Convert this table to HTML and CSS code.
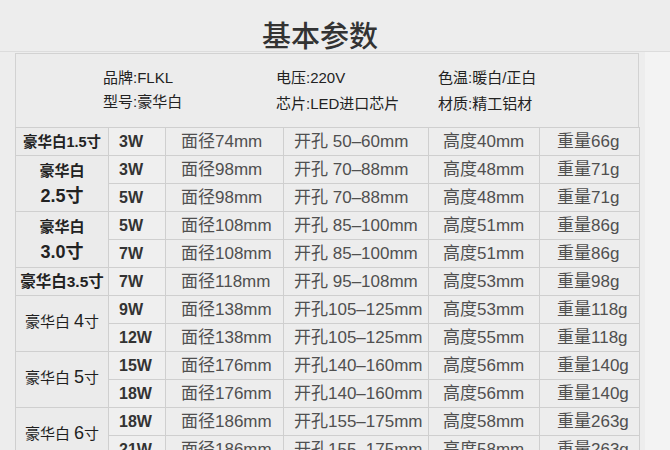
FILE: index.html
```html
<!DOCTYPE html>
<html lang="zh-CN">
<head>
<meta charset="utf-8">
<title>基本参数</title>
<link rel="stylesheet" href="styles.css">
</head>
<body>
<div class="page">
  <h1 class="title">基本参数</h1>
  <div class="sheet">
    <div class="info">
      <div class="info-col">
        <div>品牌:FLKL</div>
        <div>型号:豪华白</div>
      </div>
      <div class="info-col">
        <div>电压:220V</div>
        <div class="low">芯片:LED进口芯片</div>
      </div>
      <div class="info-col">
        <div>色温:暖白/正白</div>
        <div class="low">材质:精工铝材</div>
      </div>
    </div>
    <table class="spec">
      <colgroup>
        <col class="c-model"><col class="c-watt"><col class="c-dia"><col class="c-hole"><col class="c-height"><col class="c-weight">
      </colgroup>
      <tbody>
        <tr>
          <td class="model b">豪华白1.5寸</td>
          <td class="watt">3W</td><td class="dia">面径74mm</td><td class="hole">开孔 50–60mm</td><td class="hgt">高度40mm</td><td class="wgt">重量66g</td>
        </tr>
        <tr>
          <td class="model b" rowspan="2"><span class="l1">豪华白</span><span class="l2">2.5寸</span></td>
          <td class="watt">3W</td><td class="dia">面径98mm</td><td class="hole">开孔 70–88mm</td><td class="hgt">高度48mm</td><td class="wgt">重量71g</td>
        </tr>
        <tr>
          <td class="watt">5W</td><td class="dia">面径98mm</td><td class="hole">开孔 70–88mm</td><td class="hgt">高度48mm</td><td class="wgt">重量71g</td>
        </tr>
        <tr>
          <td class="model b" rowspan="2"><span class="l1">豪华白</span><span class="l2">3.0寸</span></td>
          <td class="watt">5W</td><td class="dia">面径108mm</td><td class="hole">开孔 85–100mm</td><td class="hgt">高度51mm</td><td class="wgt">重量86g</td>
        </tr>
        <tr>
          <td class="watt">7W</td><td class="dia">面径108mm</td><td class="hole">开孔 85–100mm</td><td class="hgt">高度51mm</td><td class="wgt">重量86g</td>
        </tr>
        <tr>
          <td class="model b big">豪华白3.5寸</td>
          <td class="watt">7W</td><td class="dia">面径118mm</td><td class="hole">开孔 95–108mm</td><td class="hgt">高度53mm</td><td class="wgt">重量98g</td>
        </tr>
        <tr>
          <td class="model r" rowspan="2">豪华白 <span class="n">4</span>寸</td>
          <td class="watt">9W</td><td class="dia">面径138mm</td><td class="hole">开孔105–125mm</td><td class="hgt">高度53mm</td><td class="wgt">重量118g</td>
        </tr>
        <tr>
          <td class="watt">12W</td><td class="dia">面径138mm</td><td class="hole">开孔105–125mm</td><td class="hgt">高度55mm</td><td class="wgt">重量118g</td>
        </tr>
        <tr>
          <td class="model r" rowspan="2">豪华白 <span class="n">5</span>寸</td>
          <td class="watt">15W</td><td class="dia">面径176mm</td><td class="hole">开孔140–160mm</td><td class="hgt">高度56mm</td><td class="wgt">重量140g</td>
        </tr>
        <tr>
          <td class="watt">18W</td><td class="dia">面径176mm</td><td class="hole">开孔140–160mm</td><td class="hgt">高度56mm</td><td class="wgt">重量140g</td>
        </tr>
        <tr>
          <td class="model r" rowspan="2">豪华白 <span class="n">6</span>寸</td>
          <td class="watt">18W</td><td class="dia">面径186mm</td><td class="hole">开孔155–175mm</td><td class="hgt">高度58mm</td><td class="wgt">重量263g</td>
        </tr>
        <tr>
          <td class="watt">21W</td><td class="dia">面径186mm</td><td class="hole">开孔155–175mm</td><td class="hgt">高度58mm</td><td class="wgt">重量263g</td>
        </tr>
      </tbody>
    </table>
  </div>
</div>
</body>
</html>
```
FILE: styles.css
```css
html, body {
  margin: 0;
  padding: 0;
  background: #ededed;
}
body {
  width: 670px;
  height: 450px;
  overflow: hidden;
  font-family: "Liberation Sans", "Noto Sans CJK SC", Arial, sans-serif;
  color: #333;
}
.page {
  width: 670px;
  background: linear-gradient(to right, #ededed 0, #ededed 645px, #f3f3f3 645px);
}
.title {
  margin: 0;
  height: 52px;
  border-bottom: 1px solid #dcdcdc;
  box-sizing: border-box;
  padding-top: 16px;
  padding-right: 30px;
  text-align: center;
  font-family: "Noto Sans CJK SC", sans-serif;
  font-weight: 500;
  font-size: 29px;
  line-height: 36px;
  color: #333;
  background: #ededed;
}
.sheet {
  margin-left: 15px;
  width: 624px;
  margin-top: 1px;
  border-top: 1px solid #d2d2d2;
  border-left: 1px solid #d2d2d2;
  border-right: 1px solid #d2d2d2;
  box-sizing: border-box;
  background: #ececec;
}
.info {
  height: 73px;
  display: grid;
  grid-template-columns: 173px 162px 1fr;
  padding-left: 87px;
  padding-top: 12px;
  box-sizing: border-box;
  font-size: 15px;
  line-height: 24px;
  color: #222;
}
.info .low {
  margin-top: 2px;
}
.spec {
  width: 624px;
  margin-left: -1px;
  border-collapse: collapse;
  table-layout: fixed;
}
.c-model { width: 93px; }
.c-watt { width: 57px; }
.c-dia { width: 118px; }
.c-hole { width: 145px; }
.c-height { width: 111px; }
.c-weight { width: 100px; }
.spec td {
  border: 1px solid #cfcfcf;
  height: 27px;
  padding: 0;
  font-size: 17px;
  line-height: 20px;
  color: #505050;
  white-space: nowrap;
  overflow: hidden;
  background: #ededed;
}
.spec td.model {
  text-align: center;
  color: #222;
  background: #ebebeb;
}
.spec td.model.b {
  font-weight: bold;
  font-size: 14.5px;
}
.spec td.model.big {
  font-size: 15.5px;
}
.spec td.model .l1 {
  display: block;
  font-size: 15px;
  line-height: 24px;
}
.spec td.model .l2 {
  display: block;
  font-size: 18px;
  line-height: 26px;
}
.spec td.model.r {
  font-size: 15px;
  color: #1f1f1f;
  padding-bottom: 4px;
}
.spec td.model.r .n {
  font-size: 18px;
}
.spec td.watt {
  padding-left: 10px;
  font-size: 16px;
  font-weight: bold;
  color: #333;
  background: #efefef;
}
.spec td.dia { padding-left: 15px; }
.spec td.hole { padding-left: 10px; }
.spec td.hgt { padding-left: 14px; }
.spec td.wgt { padding-left: 17px; }
```
